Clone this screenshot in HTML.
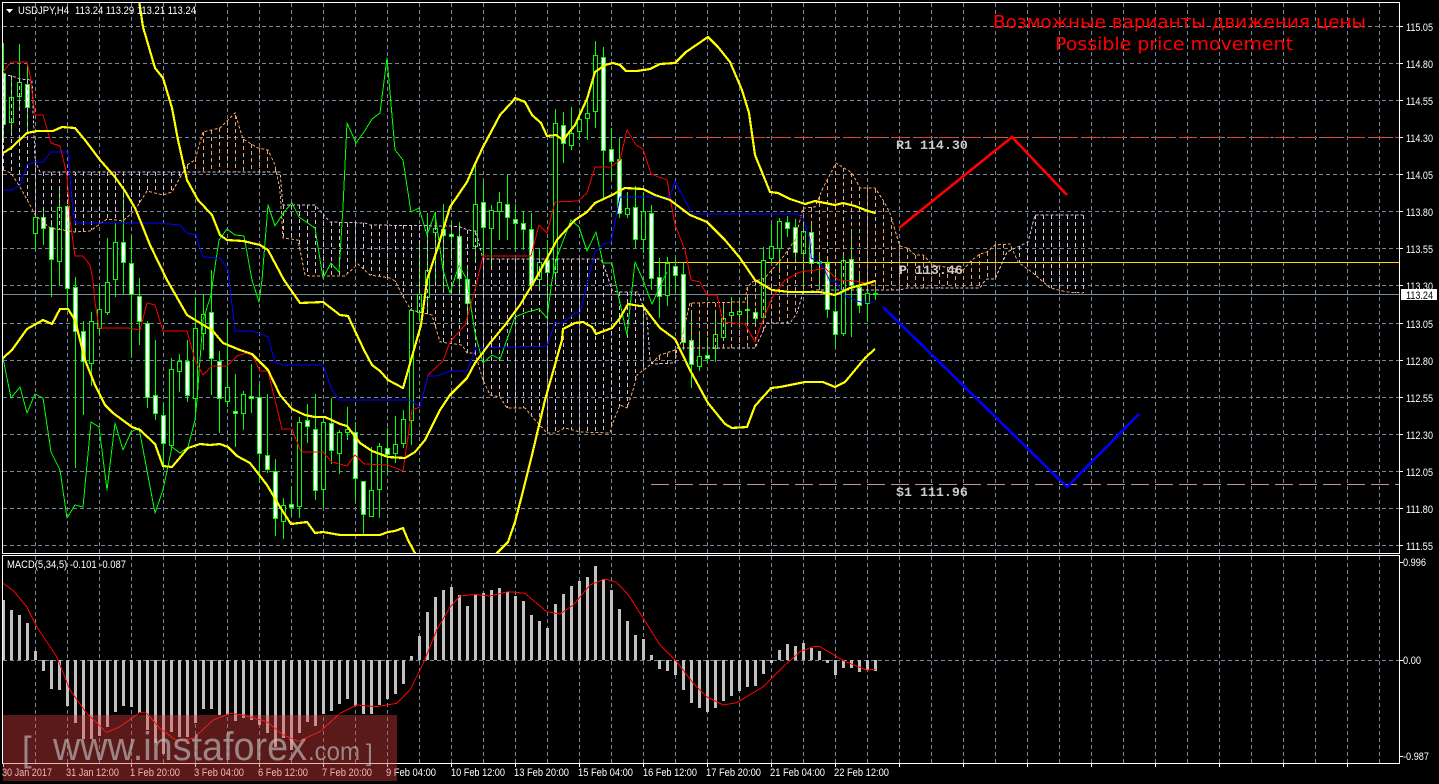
<!DOCTYPE html>
<html><head><meta charset="utf-8"><title>USDJPY,H4</title>
<style>
html,body{margin:0;padding:0;background:#000;overflow:hidden}
svg{display:block}
text{font-family:"Liberation Sans",sans-serif;fill:#fff;font-size:11px}
.m{font-family:"Liberation Mono",monospace;font-size:13.3px;fill:#ccc;font-weight:bold}
.t{font-family:"DejaVu Sans",sans-serif;font-size:17.5px;fill:#f00}
</style></head><body>
<svg xmlns="http://www.w3.org/2000/svg" width="1439" height="784" viewBox="0 0 1439 784">
<rect width="1439" height="784" fill="#000"/>
<defs>
<clipPath id="c1"><rect x="3" y="3" width="1396" height="550"/></clipPath>
<clipPath id="c2"><rect x="3" y="556" width="1396" height="207"/></clipPath>
</defs>
<g id="grid"></g>
<g clip-path="url(#c1)">
<g id="lv"></g>
<g id="candles"></g>
<g id="cloud"></g>
<g id="lines"></g>
</g>
<g clip-path="url(#c2)"><g id="macd"></g></g>
<g id="frame"></g>

<text class="t" x="993" y="28" textLength="373" lengthAdjust="spacingAndGlyphs">Возможные варианты движения цены</text>
<text class="t" x="1055" y="50" textLength="238" lengthAdjust="spacingAndGlyphs">Possible price movement</text>
<text class="m" x="896" y="149">R1 114.30</text>
<text class="m" x="899" y="274">P 113.46</text>
<text class="m" x="896" y="496">S1 111.96</text>

<polygon points="6,9 13,9 9.5,13" fill="#fff"/>
<text x="18" y="14" textLength="51" lengthAdjust="spacingAndGlyphs">USDJPY,H4</text>
<text x="75" y="14" textLength="121" lengthAdjust="spacingAndGlyphs">113.24 113.29 113.21 113.24</text>
<text x="7" y="568" textLength="119" lengthAdjust="spacingAndGlyphs">MACD(5,34,5) -0.101 -0.087</text>

<g>
<text x="1406" y="31" textLength="27" lengthAdjust="spacingAndGlyphs">115.05</text>
<text x="1406" y="68" textLength="27" lengthAdjust="spacingAndGlyphs">114.80</text>
<text x="1406" y="105" textLength="27" lengthAdjust="spacingAndGlyphs">114.55</text>
<text x="1406" y="142" textLength="27" lengthAdjust="spacingAndGlyphs">114.30</text>
<text x="1406" y="179" textLength="27" lengthAdjust="spacingAndGlyphs">114.05</text>
<text x="1406" y="216" textLength="27" lengthAdjust="spacingAndGlyphs">113.80</text>
<text x="1406" y="253" textLength="27" lengthAdjust="spacingAndGlyphs">113.55</text>
<text x="1406" y="290" textLength="27" lengthAdjust="spacingAndGlyphs">113.30</text>
<rect x="1401" y="289" width="36" height="11" fill="#fff"/>
<text x="1406" y="299" textLength="27" lengthAdjust="spacingAndGlyphs" style="fill:#000">113.24</text>
<text x="1406" y="328" textLength="27" lengthAdjust="spacingAndGlyphs">113.05</text>
<text x="1406" y="365" textLength="27" lengthAdjust="spacingAndGlyphs">112.80</text>
<text x="1406" y="402" textLength="27" lengthAdjust="spacingAndGlyphs">112.55</text>
<text x="1406" y="439" textLength="27" lengthAdjust="spacingAndGlyphs">112.30</text>
<text x="1406" y="476" textLength="27" lengthAdjust="spacingAndGlyphs">112.05</text>
<text x="1406" y="513" textLength="27" lengthAdjust="spacingAndGlyphs">111.80</text>
<text x="1406" y="550" textLength="27" lengthAdjust="spacingAndGlyphs">111.55</text>
<text x="1403" y="566" textLength="23" lengthAdjust="spacingAndGlyphs">0.996</text>
<text x="1403" y="664" textLength="18" lengthAdjust="spacingAndGlyphs">0.00</text>
<text x="1403" y="760" textLength="26" lengthAdjust="spacingAndGlyphs">-0.987</text>
</g>
<g>
<text x="2" y="776" textLength="50" lengthAdjust="spacingAndGlyphs">30 Jan 2017</text>
<text x="66" y="776" textLength="53" lengthAdjust="spacingAndGlyphs">31 Jan 12:00</text>
<text x="130" y="776" textLength="50" lengthAdjust="spacingAndGlyphs">1 Feb 20:00</text>
<text x="194" y="776" textLength="50" lengthAdjust="spacingAndGlyphs">3 Feb 04:00</text>
<text x="258" y="776" textLength="50" lengthAdjust="spacingAndGlyphs">6 Feb 12:00</text>
<text x="322" y="776" textLength="50" lengthAdjust="spacingAndGlyphs">7 Feb 20:00</text>
<text x="386" y="776" textLength="50" lengthAdjust="spacingAndGlyphs">9 Feb 04:00</text>
<text x="451" y="776" textLength="54" lengthAdjust="spacingAndGlyphs">10 Feb 12:00</text>
<text x="514" y="776" textLength="55" lengthAdjust="spacingAndGlyphs">13 Feb 20:00</text>
<text x="578" y="776" textLength="55" lengthAdjust="spacingAndGlyphs">15 Feb 04:00</text>
<text x="643" y="776" textLength="54" lengthAdjust="spacingAndGlyphs">16 Feb 12:00</text>
<text x="706" y="776" textLength="55" lengthAdjust="spacingAndGlyphs">17 Feb 20:00</text>
<text x="770" y="776" textLength="55" lengthAdjust="spacingAndGlyphs">21 Feb 04:00</text>
<text x="834" y="776" textLength="55" lengthAdjust="spacingAndGlyphs">22 Feb 12:00</text>
</g>

<rect x="3" y="715" width="394" height="66" fill="rgba(225,65,65,0.4)"/>
<g>
<text x="22" y="761" style="font-size:35px;fill:rgba(190,190,190,.65)">[</text>
<text x="53" y="760" textLength="254" lengthAdjust="spacingAndGlyphs" style="font-size:40px;fill:rgba(190,190,190,.65)">www.instaforex</text>
<text x="308" y="760" textLength="52" lengthAdjust="spacingAndGlyphs" style="font-size:26px;fill:rgba(190,190,190,.65)">.com</text>
<text x="366" y="761" style="font-size:24px;fill:rgba(190,190,190,.65)">]</text>
</g>
</svg>
<script>
var $=function(i){return document.getElementById(i)};
var pl=function(a){return a.map(function(p){return p[0]+','+p[1]}).join(' ')};
var GR='#778899';
/* grid */
var g='';
[26,63,100,137,174,211,248,285,323,360,397,434,471,508,545,660].forEach(function(y){
 g+='<path d="M3 '+(y+.5)+'H1399" stroke="'+GR+'" stroke-dasharray="4 3" shape-rendering="crispEdges"/>';
});
for(var x=35.5;x<1399;x+=32){
 g+='<path d="M'+x+' 3V553M'+x+' 556V763" stroke="'+GR+'" stroke-dasharray="4 3" shape-rendering="crispEdges"/>';
}
$('grid').innerHTML=g;
/* level lines */
var L='<path d="M651 137.5H1399" stroke="#dd4a12" stroke-dasharray="18 6" shape-rendering="crispEdges"/>'+
'<path d="M651 484.5H1399" stroke="#c8968c" stroke-dasharray="18 6" shape-rendering="crispEdges"/>'+
'<path d="M651 262.5H1399" stroke="#ffd700" shape-rendering="crispEdges"/>'+
'<path d="M3 294.5H1399" stroke="#778899" shape-rendering="crispEdges"/>';
$('lv').innerHTML=L;
/* candles: high,low,top,bottom,white */
var C=[[43,143,73,124,1],[75,135,97,122,0],[44,110,82,96,0],[65,130,84,107,1],[213,250,217,233,0],[207,245,217,228,1],
[220,297,227,259,1],[190,285,207,261,0],[205,307,206,288,1],[277,468,287,331,1],[321,415,331,361,1],[312,386,321,363,0],
[285,335,309,328,0],[238,315,282,312,0],[223,297,242,279,0],[190,294,242,262,1],[236,358,263,294,1],[278,345,296,321,1],
[321,408,323,397,1],[340,420,395,413,1],[403,470,415,443,1],[358,450,369,445,0],[354,392,361,371,0],[340,402,361,395,1],
[297,417,328,398,0],[294,350,314,333,0],[270,395,312,358,1],[351,433,361,398,1],[321,407,387,401,0],[374,447,411,413,1],
[391,430,394,413,0],[364,413,396,398,1],[385,483,397,453,1],[394,473,455,469,1],[459,536,471,518,1],[498,539,505,521,0],
[486,516,504,507,1],[417,518,422,506,0],[404,443,420,426,1],[394,500,429,490,1],[420,508,422,489,0],[398,464,423,450,1],
[430,474,432,453,0],[407,440,429,432,0],[422,502,432,478,1],[481,534,481,514,1],[447,516,490,516,0],[443,518,446,489,0],
[428,473,448,454,1],[416,463,444,453,0],[410,448,419,443,0],[308,445,310,420,0],[240,320,294,312,0],[213,310,270,297,0],
[212,285,228,232,0],[204,290,229,235,1],[222,260,234,236,1],[222,290,236,278,1],[265,323,279,303,1],[163,263,204,246,0],
[182,256,202,227,1],[205,267,210,228,0],[192,240,202,211,0],[174,240,204,217,1],[204,250,219,223,1],[211,250,223,229,1],
[213,290,229,285,1],[248,290,262,279,0],[240,318,260,272,1],[109,285,123,272,0],[112,163,125,143,1],[107,150,133,145,0],
[110,140,119,131,0],[100,140,113,118,0],[41,128,55,111,0],[47,200,57,150,1],[128,180,149,161,1],[138,218,159,213,1],
[192,218,208,214,0],[186,248,207,239,1],[193,253,211,239,0],[205,290,213,278,1],[258,318,277,296,1],[257,306,263,295,0],
[258,293,266,275,1],[263,350,274,342,1],[313,388,340,364,1],[332,371,356,366,0],[337,363,355,358,1],[312,362,334,348,0],
[302,337,318,337,0],[297,323,312,315,0],[298,323,311,314,0],[295,323,309,309,0],[308,323,312,318,1],[247,320,260,317,0],
[224,263,246,258,0],[218,273,221,248,0],[216,237,222,228,1],[219,263,227,252,1],[220,290,231,253,0],[223,270,232,263,1],
[253,287,261,263,1],[258,318,263,309,1],[270,347,311,334,1],[255,336,260,333,0],[233,337,259,285,1],[275,313,287,305,1],
[282,322,293,303,0],[283,300,293,293,0]];
var s='';
C.forEach(function(c,k){
 var x=3.5+8*k;
 s+='<path d="M'+x+' '+c[0]+'V'+c[1]+'" stroke="#0f0" shape-rendering="crispEdges"/>';
 var h=c[3]-c[2];
 if(h<1)h=1;
 s+='<rect x="'+(x-2)+'" y="'+(c[2]+.5)+'" width="4" height="'+h+'" fill="'+(c[4]?'#fff':'#000')+'" stroke="#0f0" shape-rendering="crispEdges"/>';
});
$('candles').innerHTML=s;
/* cloud */
var A=[[3,170],[11,173],[20,187],[30,205],[35,215],[50,228],[75,232],[90,231],[107,219],[123,221],[135,210],[147,191],[163,195],[172,192],[187,165],[195,160],[203,132],[220,128],[235,113],[243,139],[258,148],[268,150],[275,165],[280,190],[283,238],[298,240],[305,275],[310,276],[345,276],[358,264],[370,275],[390,278],[395,281],[405,300],[411,310],[432,315],[440,342],[462,345],[467,353],[475,353],[483,380],[490,395],[500,397],[507,408],[525,408],[535,420],[547,433],[555,433],[565,428],[580,432],[610,433],[612,425],[620,405],[627,408],[633,390],[637,375],[650,365],[660,355],[675,350],[680,345],[690,303],[745,302],[747,288],[752,282],[765,278],[783,257],[795,240],[803,208],[815,207],[823,188],[836,163],[852,173],[860,188],[875,188],[883,200],[890,213],[897,237],[900,246],[907,248],[915,255],[923,255],[933,265],[963,270],[972,260],[980,254],[987,252],[995,245],[1010,244],[1018,262],[1033,273],[1050,288],[1067,292],[1083,293]];
var B=[[3,75],[12,76],[20,79],[32,80],[35,160],[40,172],[280,172],[283,205],[315,205],[330,222],[365,223],[370,225],[450,226],[460,227],[468,230],[476,231],[483,259],[600,259],[603,263],[612,290],[617,292],[638,292],[647,317],[650,360],[653,364],[675,363],[677,348],[755,348],[767,323],[790,323],[797,313],[803,293],[817,290],[900,290],[907,288],[980,288],[983,283],[987,279],[995,279],[1007,252],[1020,246],[1028,242],[1035,215],[1083,215]];
function at(a,x){for(var i=1;i<a.length;i++){if(x<=a[i][0]){var p=a[i-1],q=a[i];return p[1]+(q[1]-p[1])*(x-p[0])/(q[0]-p[0]);}}return a[a.length-1][1];}
var cl='';
for(var k=0;k<136;k++){
 var x=3.5+8*k,a=at(A,x),b=at(B,x);
 cl+='<path d="M'+x+' '+Math.round(Math.min(a,b))+'V'+Math.round(Math.max(a,b))+'" stroke="'+(a<b?'#f4a460':'#d8bfd8')+'" stroke-dasharray="4 3" shape-rendering="crispEdges"/>';
}
cl+='<polyline points="'+pl(A)+'" fill="none" stroke="#f4a460" stroke-dasharray="3 2" shape-rendering="crispEdges"/>';
cl+='<polyline points="'+pl(B)+'" fill="none" stroke="#d8bfd8" stroke-dasharray="3 2" shape-rendering="crispEdges"/>';
$('cloud').innerHTML=cl;
/* lines */
var G=[[3,358],[11,398],[20,387],[27,413],[35,394],[43,398],[51,452],[60,470],[67,518],[75,505],[83,507],[91,422],[99,427],[107,490],[115,423],[123,450],[131,432],[139,428],[155,513],[163,490],[172,447],[180,453],[188,447],[195,420],[197,400],[203,320],[211,295],[213,280],[219,240],[227,229],[235,235],[244,236],[252,280],[259,302],[262,280],[268,205],[275,226],[284,212],[292,203],[299,217],[315,228],[323,278],[331,263],[339,272],[343,207],[347,123],[356,143],[364,132],[372,119],[380,113],[387,58],[395,150],[403,160],[411,212],[419,208],[427,235],[435,213],[443,270],[450,293],[459,265],[467,280],[473,320],[475,333],[483,363],[492,355],[500,359],[515,317],[527,312],[539,309],[547,318],[552,280],[557,257],[571,220],[579,227],[587,251],[596,232],[603,263],[612,263],[615,280],[627,335],[633,280],[635,262],[643,280],[652,304],[663,280],[667,272]];
var R=[[3,72],[11,62],[27,62],[30,75],[35,115],[43,115],[51,143],[60,146],[67,175],[70,220],[75,256],[83,256],[90,265],[93,280],[95,302],[99,328],[128,328],[140,330],[147,303],[155,305],[163,331],[187,331],[195,360],[203,375],[212,366],[227,366],[237,356],[247,353],[253,356],[260,371],[268,371],[282,429],[292,429],[301,452],[323,452],[332,462],[347,466],[355,455],[364,464],[388,465],[403,471],[412,410],[420,407],[428,375],[443,361],[450,342],[465,325],[475,290],[483,256],[531,256],[539,225],[547,233],[555,202],[578,201],[587,193],[595,167],[611,167],[620,160],[627,130],[636,145],[643,149],[651,174],[667,180],[675,225],[685,250],[691,280],[700,282],[707,295],[717,295],[723,322],[745,324],[755,342],[763,320],[772,298],[785,280],[800,272],[815,270],[825,268],[838,280],[855,281],[875,285]];
var Bl=[[3,190],[12,190],[20,185],[27,165],[35,162],[43,162],[51,152],[68,152],[72,200],[75,223],[157,223],[180,225],[187,233],[196,235],[203,257],[220,258],[228,270],[229,280],[235,331],[252,331],[268,337],[275,362],[283,365],[323,365],[332,390],[339,400],[410,400],[420,407],[428,376],[437,376],[450,371],[467,371],[476,348],[547,346],[555,323],[563,323],[575,313],[580,313],[588,280],[595,252],[603,244],[611,242],[620,197],[670,197],[675,181],[690,210],[692,214],[797,214],[803,218],[810,240],[811,258],[820,262],[827,275],[830,281],[835,281],[845,296],[860,302],[875,302]];
var Y1=[[139,0],[143,27],[155,68],[163,78],[172,108],[178,140],[187,180],[198,200],[212,215],[220,235],[227,240],[243,241],[260,245],[268,250],[284,280],[300,303],[323,302],[340,315],[348,316],[364,350],[372,365],[380,371],[388,380],[403,388],[411,360],[421,325],[427,280],[437,250],[450,207],[467,182],[475,164],[483,147],[500,115],[512,102],[515,98],[525,102],[532,115],[541,123],[547,136],[556,135],[563,140],[575,125],[587,99],[595,72],[605,65],[613,63],[620,65],[626,71],[637,71],[650,69],[660,64],[675,63],[686,52],[708,37],[718,47],[730,62],[742,90],[749,113],[755,155],[770,192],[778,193],[790,199],[805,204],[815,201],[820,202],[835,205],[843,203],[855,206],[868,211],[875,213]];
var Y2=[[3,153],[11,148],[27,133],[37,131],[53,131],[62,127],[75,128],[85,140],[100,160],[115,177],[125,191],[135,208],[142,225],[150,245],[167,280],[187,315],[200,323],[212,330],[223,343],[240,350],[252,354],[268,370],[280,395],[292,409],[305,415],[315,417],[325,417],[340,424],[347,426],[360,443],[372,451],[388,457],[405,458],[415,452],[425,440],[440,410],[450,395],[467,378],[475,363],[490,343],[505,325],[520,305],[535,280],[545,262],[557,240],[565,231],[575,220],[587,212],[595,203],[612,195],[625,188],[643,189],[655,195],[670,200],[690,215],[707,222],[725,240],[740,258],[755,280],[772,290],[790,292],[820,292],[835,295],[850,288],[865,284],[875,281]];
var Y3=[[3,358],[12,350],[27,329],[43,320],[52,324],[60,309],[68,309],[75,320],[85,360],[95,385],[105,405],[113,413],[132,427],[140,430],[155,444],[163,466],[172,467],[188,448],[200,444],[210,445],[220,444],[228,447],[237,456],[250,463],[267,485],[280,507],[291,524],[307,522],[315,533],[323,532],[340,535],[380,535],[388,532],[395,531],[403,528],[408,540],[416,555]];
var Y4=[[495,555],[508,542],[515,522],[522,495],[532,455],[545,400],[562,340],[563,329],[575,323],[583,322],[592,327],[596,334],[612,328],[620,318],[628,304],[640,306],[643,306],[660,328],[675,339],[690,370],[708,403],[725,424],[732,428],[747,427],[755,406],[771,388],[780,387],[790,385],[805,382],[823,382],[835,387],[845,382],[855,370],[865,358],[875,349]];
function line(a,c,w){return '<polyline points="'+pl(a)+'" fill="none" stroke="'+c+'" stroke-width="'+w+'" stroke-linejoin="round" shape-rendering="crispEdges"/>';}
var ls=line(G,'#0f0',1)+line(R,'#f00',1)+line(Bl,'#00f',1)+line(Y1,'#ff0',2.2)+line(Y2,'#ff0',2.2)+line(Y3,'#ff0',2.2)+line(Y4,'#ff0',2.2);
ls+=line([[899,228],[1012,137],[1067,195]],'#f00',2.6);
ls+=line([[883,307],[1067,487],[1139,414]],'#00f',2.6);
$('lines').innerHTML=ls;
/* macd */
var M=[150,180,195,218,302,362,417,420,468,520,568,568,558,531,486,468,470,490,540,580,612,545,562,562,520,477,477,495,495,512,505,510,525,548,590,565,600,548,515,527,491,483,462,447,467,491,491,465,447,432,401,318,258,186,141,120,
110,135,168,135,130,120,114,125,138,153,195,213,234,162,132,108,93,81,48,87,120,177,213,255,267,315,357,362,375,420,459,474,486,474,453,438,423,411,408,372,340,300,282,288,279,294,303,339,375,354,354,366,360,363];
var m='';
M.forEach(function(v,k){
 var x=2+8*k,y=550+v/3,z=660;
 var t=Math.round(Math.min(y,z)),h=Math.max(1,Math.round(Math.abs(y-z)));
 m+='<rect x="'+x+'" y="'+t+'" width="3" height="'+h+'" fill="#c0c0c0"/>';
});
var S1=[[10,100],[40,122],[80,170],[110,230],[170,320],[210,420],[260,490],[320,547],[360,530],[420,487],[440,490],[480,535],[530,572],[580,565],[640,510],[690,490],[730,495],[800,515],[850,555],[895,574],[960,545],[1020,490],[1070,465],[1130,470],[1190,460],[1230,420],[1270,340],[1310,240],[1350,172]].map(function(p){return [p[0]/3,550+p[1]/3]});
var S2=[[30,138],[75,133],[120,138],[175,125],[225,130],[290,185],[330,192],[370,165],[420,105],[465,87],[500,97],[535,135],[580,205],[630,285],[680,335],[730,400],[770,440],[820,465],[860,458],[940,410],[1000,350],[1050,305],[1090,290],[1110,290],[1180,332],[1250,360],[1276,358]].map(function(p){return [450+p[0]/3,550+p[1]/3]});
m+='<polyline points="'+pl(S1.concat(S2))+'" fill="none" stroke="#f00" stroke-width="1" shape-rendering="crispEdges"/>';
$('macd').innerHTML=m;
/* frame */
var f='<rect x="2.5" y="2.5" width="1397" height="551" fill="none" stroke="#fff" shape-rendering="crispEdges"/>'+
'<rect x="2.5" y="555.5" width="1397" height="208" fill="none" stroke="#fff" shape-rendering="crispEdges"/>';
[26,63,100,137,174,211,248,285,323,360,397,434,471,508,545,562,660,756].forEach(function(y){
 f+='<path d="M1400 '+(y+.5)+'H1403" stroke="#fff" shape-rendering="crispEdges"/>';
});
for(var x=3.5;x<1399;x+=64){f+='<path d="M'+x+' 764V767" stroke="#fff" shape-rendering="crispEdges"/>';}
$('frame').innerHTML=f;
</script>
</body></html>
